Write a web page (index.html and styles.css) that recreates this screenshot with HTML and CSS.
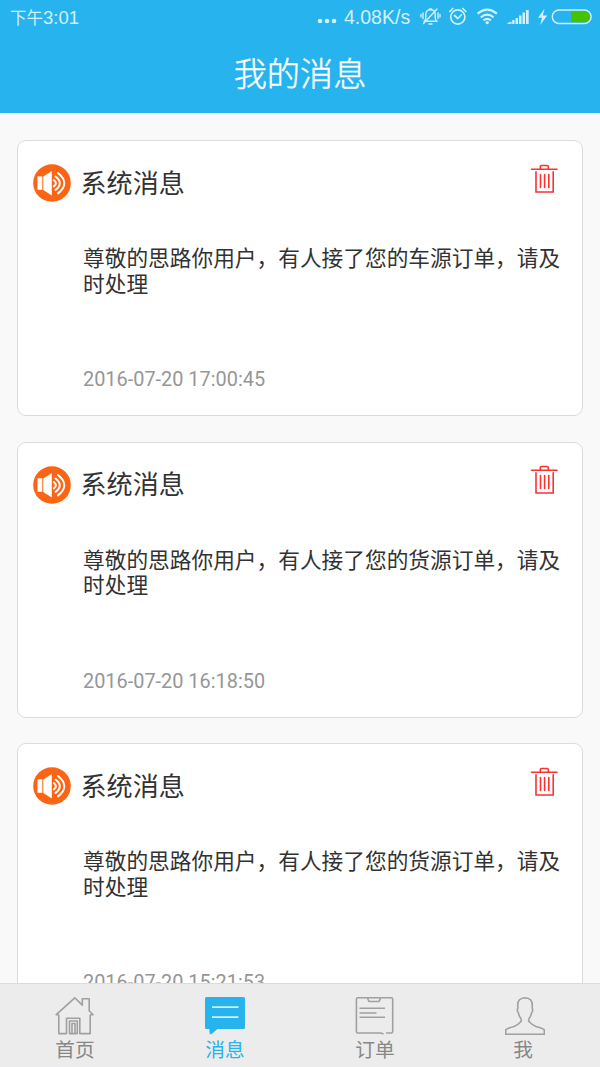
FILE: index.html
```
<!DOCTYPE html>
<html lang="zh-CN">
<head>
<meta charset="utf-8">
<title>我的消息</title>
<link rel="stylesheet" href="styles.css">
</head>
<body>
<svg class="symbols" width="0" height="0" aria-hidden="true">
  <symbol id="speaker" viewBox="0 0 38 38">
    <circle cx="19" cy="19" r="18.800" fill="#fa6414"/>
    <path d="M4.500 12.300h4.800v13.500H4.500z" fill="#fff"/>
    <path d="M10.300 12.500 18.800 7v24.500L10.300 26z" fill="#fff"/>
    <path d="M20.800 16q4.200 3.200 0 6.400M22.500 12.500q8.600 6.700 0 13.400M25 9q12.600 10.200 0 20.400" fill="none" stroke="#fff" stroke-width="2" stroke-linecap="round"/>
  </symbol>
  <symbol id="trash" viewBox="0 0 28 30">
    <path d="M1.500 5.200h25.500M10.300 5V2.600q0-1.100 1.200-1.100h5.600q1.200 0 1.200 1.100V5M6 7.800v20.200h17.200V7.800M10.500 10.500v13M14.600 10.500v13M18.800 10.500v13" fill="none" stroke="#fa3232" stroke-width="1.600" stroke-linecap="round"/>
  </symbol>
</svg>
<div class="app">
  <header class="header">
    <div class="status">
      <span class="clock"><span class="clock-cjk">下午</span>3:01</span>
      <svg class="dots" width="20" height="6" viewBox="0 0 20 6"><circle cx="3" cy="3" r="2.300"/><circle cx="10" cy="3" r="2.300"/><circle cx="17" cy="3" r="2.300"/></svg>
      <span class="speed">4.08K/s</span>
      <svg class="status-icons" width="180" height="24" viewBox="420 5 180 24">
        <g fill="none" stroke="#d3f0fc" stroke-width="1.400" stroke-linecap="round" stroke-linejoin="round">
          <path d="M424 21.300q1.800-1 1.800-3.500v-3.500q0-4.500 4.700-4.500t4.700 4.500v3.500q0 2.500 1.800 3.500zM429 24h3M429.500 9h2M423 13v5.500M438 13v5.500M421 14.500v2.500M440 14.500v2.500M423.500 23.500 437 9"/>
          <circle cx="457.800" cy="17" r="7.100" stroke-width="1.700"/>
          <path d="M454.500 15.500l3.300 3 3.500-3.500M449.800 11.500l3-3M465.800 11.500l-3-3" stroke-width="1.700"/>
          <path d="M477.500 13.700q9.700-8 19.400 0M480.800 17.300q6.400-5.200 12.800 0M483.500 20.300q3.700-2.800 7.400 0" stroke-width="2.200" stroke-linecap="butt"/>
          <rect x="552.300" y="10" width="38.800" height="13.500" rx="6.700" stroke-width="1.400"/>
        </g>
        <g fill="#d3f0fc">
          <circle cx="487.200" cy="22.600" r="1.700"/>
          <path d="M507.500 24v-1l4-1.500V24zM512.200 24v-4h2.300v4zM515.500 24v-6h2.500v6zM519 24v-8.500h2.500V24zM522.500 24V12.500h2.500V24zM526 24V10h2.700v14z"/>
          <path d="M544.500 8.800l-6.500 9h4l-1.800 7.200 7-9.500h-4.300z"/>
        </g>
        <path d="M571 11.200h13.500a5.500 5.500 0 0 1 0 11H571z" fill="#46c300"/>
      </svg>
    </div>
    <h1 class="title">我的消息</h1>
  </header>

  <main class="list">
    <article class="card">
      <div class="card-head">
        <svg class="speaker"><use href="#speaker"/></svg>
        <h2 class="card-title">系统消息</h2>
        <svg class="trash"><use href="#trash"/></svg>
      </div>
      <p class="message">尊敬的思路你用户，有人接了您的车源订单，请及时处理</p>
      <time class="date">2016-07-20 17:00:45</time>
    </article>
    <article class="card">
      <div class="card-head">
        <svg class="speaker"><use href="#speaker"/></svg>
        <h2 class="card-title">系统消息</h2>
        <svg class="trash"><use href="#trash"/></svg>
      </div>
      <p class="message">尊敬的思路你用户，有人接了您的货源订单，请及时处理</p>
      <time class="date">2016-07-20 16:18:50</time>
    </article>
    <article class="card">
      <div class="card-head">
        <svg class="speaker"><use href="#speaker"/></svg>
        <h2 class="card-title">系统消息</h2>
        <svg class="trash"><use href="#trash"/></svg>
      </div>
      <p class="message">尊敬的思路你用户，有人接了您的货源订单，请及时处理</p>
      <time class="date">2016-07-20 15:21:53</time>
    </article>
  </main>

  <nav class="tabs">
    <a class="tab">
      <svg class="tab-icon" viewBox="0 0 40 40"><path d="M3.800 17.700v18.900h7.700V21.300h13.300v15.300h10.400V17.700M14.500 36.600V24h7.800v12.600zM17 36.500v-10h3v10M3.800 17.700H1.200L19.800.800l7.500 7.300V1.800h6.900v12l3.800 3.900h-2.800" class="line"/></svg>
      <span>首页</span>
    </a>
    <a class="tab tab-active">
      <svg class="tab-icon" viewBox="0 0 40 40"><path d="M1.500 0h37Q40 0 40 1.500v29q0 1.500-1.500 1.500H12.500L6.500 37Q4.800 38 4.700 36.500L4.200 32H1.500Q0 32 0 30.500v-29Q0 0 1.500 0z" fill="#27b4ee"/><path d="M7 10.200h26.500M7 20.200h26.500" stroke="#d4f0fc" stroke-width="1.700"/></svg>
      <span>消息</span>
    </a>
    <a class="tab">
      <svg class="tab-icon" viewBox="0 0 40 40"><path d="M26 36H2.900Q1.400 36 1.400 34.500V2.300Q1.400.8 2.900.8h33.300q1.500 0 1.500 1.500v32.200q0 1.500-1.500 1.500H31M26 36l2.500 1M12 1q.7 0 1 1.300.5 2.200 1.800 2.200h8.500q1.300 0 1.800-2.200.3-1.300 1-1.300M4.500 11.300h25.500M4.500 16H21.500M4.500 20.200h25.500" class="line"/></svg>
      <span>订单</span>
    </a>
    <a class="tab tab-me">
      <svg class="tab-icon" viewBox="0 0 40 40"><path d="M16 21.500Q13.800 19 13.500 16q-1.500-1.500-1-4 .6-1 .2-3.500Q12.500 1.100 20 .8q7.500.3 7.300 7.700-.4 2.500.2 3.500.5 2.500-1 4-.3 3-2.500 5.500 0 2-.5 2.500 3.500 4 7.500 5.500 7.500 2 8.300 3.500v4.200H.700V33q.8-1.500 8.300-3.500 4-1.500 7.500-5.500-.5-.5-.5-2.500z" class="line"/></svg>
      <span>我</span>
    </a>
  </nav>
</div>
</body>
</html>
```
FILE: styles.css
```
* { box-sizing: border-box; }

body {
  margin: 0;
  font-family: Roboto, "Noto Sans CJK SC", sans-serif;
  background: #f9f9f9;
}

.symbols { display: none; }

.app {
  display: flex;
  flex-direction: column;
  height: 1067px;
  overflow: hidden;
}

.header {
  flex: none;
  height: 113px;
  background: #27b4ee;
  color: #fff;
}

.status {
  display: flex;
  align-items: center;
  height: 34px;
  padding-left: 10px;
  color: #d3f0fc;
  font-family: "Liberation Sans", "Noto Sans CJK SC", sans-serif;
  font-size: 18.5px;
  white-space: nowrap;
}

.clock { flex: 1; }
.clock-cjk { font-size: 16.5px; }
.dots { margin: 7px 7px 0 0; fill: #d3f0fc; }
.speed { width: 76px; font-size: 19.5px; }
.status-icons { flex: none; }

.title {
  margin: 17px 0 0;
  font-size: 33.2px;
  font-weight: 300;
  line-height: 48px;
  text-align: center;
  -webkit-text-stroke: 0.4px #fff;
}

.list {
  flex: 1;
  min-height: 0;
  display: flex;
  flex-direction: column;
  gap: 25.7px;
  padding: 27px 17px 0;
  overflow: hidden;
}

.card {
  flex: none;
  display: flex;
  flex-direction: column;
  height: 276px;
  padding: 22.6px 20px 0 15px;
  border: 1.500px solid #dcdcdc;
  border-radius: 9px;
  background: #fff;
}

.card-head {
  display: flex;
  align-items: center;
  height: 40px;
}

.speaker { width: 38px; height: 38px; margin-top: -1px; }

.card-title {
  flex: 1;
  margin: 0 0 0 9.5px;
  color: #323232;
  font-size: 26.1px;
  font-weight: 400;
  line-height: 40px;
}

.trash { width: 28px; height: 30px; margin: -10px 4px 0 0; }

.message {
  height: 121px;
  margin: 42.4px 0 0 50px;
  width: 480px;
  color: #323232;
  font-size: 21.7px;
  line-height: 25.7px;
}

.date {
  margin: 0 0 0 50px;
  color: #969696;
  font-size: 19.9px;
  line-height: 26px;
}

.tabs {
  flex: none;
  display: grid;
  grid-template-columns: repeat(4, 1fr);
  height: 84.500px;
  border-top: 1px solid #dcdcdc;
  background: #ececec;
}

.tab {
  display: flex;
  flex-direction: column;
  align-items: center;
  padding-top: 13px;
  color: #878787;
  font-size: 19.7px;
  line-height: 27px;
}

.tab-icon { width: 40px; height: 40px; }
.tab-active { color: #27b4ee; }
.tab-me span { margin-right: 4px; }

.line {
  fill: none;
  stroke: #a0a0a0;
  stroke-width: 1.600;
  stroke-linejoin: round;
}
```
